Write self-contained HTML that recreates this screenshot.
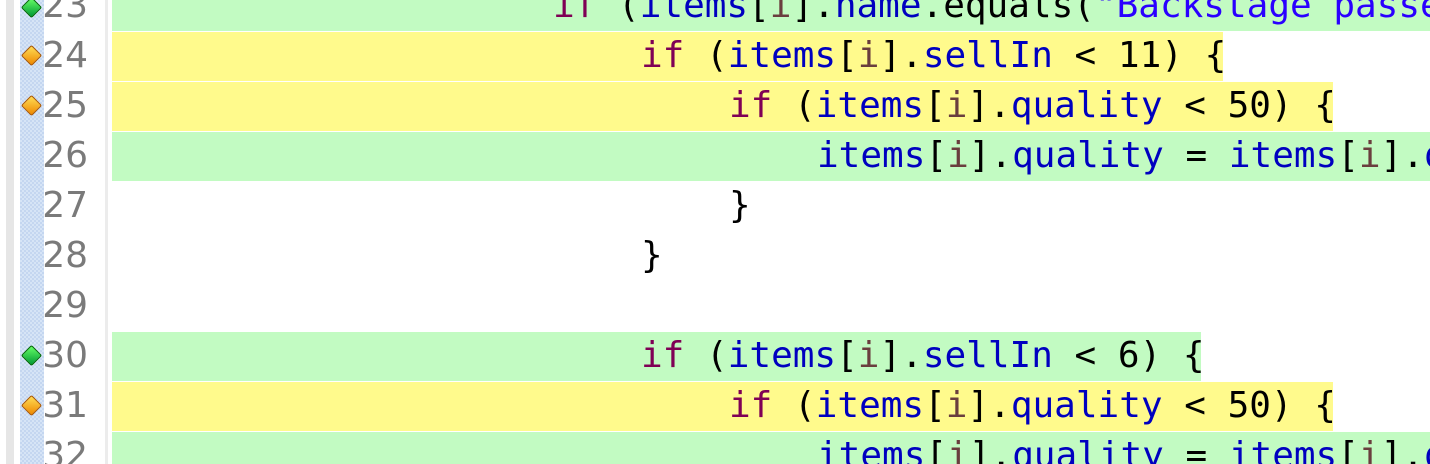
<!DOCTYPE html>
<html style="width:1430px;height:464px;overflow:hidden"><head><meta charset="utf-8"><style>
*{margin:0;padding:0}
body{width:1430px;height:464px;overflow:hidden;background:#fff;position:relative;font-family:"DejaVu Sans Mono","Liberation Mono",monospace}
.g1{position:absolute;left:6px;top:0;width:8px;height:464px;background:#e6e6e6}
.ck{position:absolute;left:20px;top:0;width:24px;height:464px;background-color:#d6e4f6;background-image:linear-gradient(45deg,#c4d6f0 25%,transparent 25%,transparent 75%,#c4d6f0 75%),linear-gradient(45deg,#c4d6f0 25%,transparent 25%,transparent 75%,#c4d6f0 75%);background-size:4px 4px;background-position:0 0,2px 2px}
.bd{position:absolute;left:105px;top:0;width:3px;height:464px;background:#ececec}
.num{position:absolute;left:40px;width:48px;text-align:right;font-family:"DejaVu Sans","Liberation Sans",sans-serif;font-size:36px;color:#7a7a7a;height:50px;line-height:50px}
.hl{position:absolute;left:112px;height:49px}
.gr{background:#c2fbc2}.ye{background:#fffa8c}
.ln{position:absolute;height:50px;line-height:50px;font-size:36px;white-space:pre;color:#000}
.k{color:#7f0055}.f{color:#0000c0}.v{color:#6a3e3e}.s{color:#2a00ff}
.d{position:absolute;left:24px;width:13px;height:13px;transform:rotate(45deg);border-radius:2px}
.dg{background:linear-gradient(135deg,#6f6,#093);border:1px solid #060}
.dy{background:linear-gradient(135deg,#fd5,#e80);border:1px solid #a50}
</style></head><body>
<div class="g1"></div><div class="ck"></div><div class="bd"></div>

<div class="hl gr" style="top:-18px;width:1318px"></div>
<div class="hl ye" style="top:32px;width:1111px"></div>
<div class="hl ye" style="top:82px;width:1221px"></div>
<div class="hl gr" style="top:132px;width:1318px"></div>
<div class="hl gr" style="top:332px;width:1089px"></div>
<div class="hl ye" style="top:382px;width:1221px"></div>
<div class="hl gr" style="top:432px;width:1318px;height:32px"></div>

<div class="d dg" style="top:0px"></div>
<div class="d dy" style="top:48px"></div>
<div class="d dy" style="top:98px"></div>
<div class="d dg" style="top:348px"></div>
<div class="d dy" style="top:398px"></div>

<div class="num" style="top:-19px">23</div>
<div class="num" style="top:31px">24</div>
<div class="num" style="top:81px">25</div>
<div class="num" style="top:131px">26</div>
<div class="num" style="top:181px">27</div>
<div class="num" style="top:231px">28</div>
<div class="num" style="top:281px">29</div>
<div class="num" style="top:331px">30</div>
<div class="num" style="top:381px">31</div>
<div class="num" style="top:431px;height:33px;overflow:hidden">32</div>

<div class="ln" style="top:-19px;left:553px;width:877px;overflow:hidden"><span class="k">if</span> (<span class="f">items</span>[<span class="v">i</span>].<span class="f">name</span>.equals(<span class="s">"Backstage passes</span></div>
<div class="ln" style="top:31px;left:641px"><span class="k">if</span> (<span class="f">items</span>[<span class="v">i</span>].<span class="f">sellIn</span> &lt; 11) {</div>
<div class="ln" style="top:81px;left:729px"><span class="k">if</span> (<span class="f">items</span>[<span class="v">i</span>].<span class="f">quality</span> &lt; 50) {</div>
<div class="ln" style="top:131px;left:817px;width:613px;overflow:hidden"><span class="f">items</span>[<span class="v">i</span>].<span class="f">quality</span> = <span class="f">items</span>[<span class="v">i</span>].<span class="f">quality</span></div>
<div class="ln" style="top:181px;left:729px">}</div>
<div class="ln" style="top:231px;left:641px">}</div>
<div class="ln" style="top:331px;left:641px"><span class="k">if</span> (<span class="f">items</span>[<span class="v">i</span>].<span class="f">sellIn</span> &lt; 6) {</div>
<div class="ln" style="top:381px;left:729px"><span class="k">if</span> (<span class="f">items</span>[<span class="v">i</span>].<span class="f">quality</span> &lt; 50) {</div>
<div class="ln" style="top:431px;left:817px;width:613px;height:33px;overflow:hidden"><span class="f">items</span>[<span class="v">i</span>].<span class="f">quality</span> = <span class="f">items</span>[<span class="v">i</span>].<span class="f">quality</span></div>
</body></html>
